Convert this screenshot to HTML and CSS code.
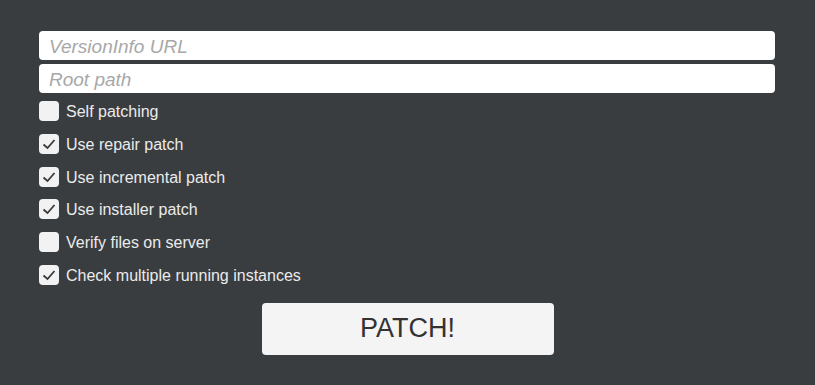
FILE: index.html
```html
<!DOCTYPE html>
<html lang="en">
<head>
    <meta charset="UTF-8">
    <title>Patcher</title>
    <link rel="stylesheet" href="styles.css">
</head>
<body>

    <!-- Patcher Settings -->
    <div class="panel">
        <input type="text" class="field" placeholder="VersionInfo URL">
        <input type="text" class="field" placeholder="Root path">

        <div class="options">
            <label class="option"><span class="box"></span><span class="text">Self patching</span></label>
            <label class="option"><span class="box checked"><svg viewBox="0 0 20 20"><path d="M4.5 10.5 L8.5 14 L15.5 6"/></svg></span><span class="text">Use repair patch</span></label>
            <label class="option"><span class="box checked"><svg viewBox="0 0 20 20"><path d="M4.5 10.5 L8.5 14 L15.5 6"/></svg></span><span class="text">Use incremental patch</span></label>
            <label class="option"><span class="box checked"><svg viewBox="0 0 20 20"><path d="M4.5 10.5 L8.5 14 L15.5 6"/></svg></span><span class="text">Use installer patch</span></label>
            <label class="option"><span class="box"></span><span class="text">Verify files on server</span></label>
            <label class="option"><span class="box checked"><svg viewBox="0 0 20 20"><path d="M4.5 10.5 L8.5 14 L15.5 6"/></svg></span><span class="text">Check multiple running instances</span></label>
        </div>

        <div class="actions">
            <button class="patch-button">PATCH!</button>
        </div>
    </div>

</body>
</html>
```

FILE: styles.css
```css
body {
    margin: 0;
    font-family: "Liberation Sans", Arial, sans-serif;
    background-color: #3a3d40;
    color: #ebebeb;
}

/* Panel */
.panel {
    padding: 31px 40px 0 39px;
    display: flex;
    flex-direction: column;
}

/* Text Fields */
.field {
    display: block;
    box-sizing: border-box;
    width: 100%;
    height: 29px;
    margin: 0 0 4px 0;
    padding: 2px 10px 0 10px;
    border: none;
    border-radius: 4px;
    background-color: #ffffff;
    font-family: "Liberation Sans", Arial, sans-serif;
    font-size: 19px;
    color: #333;
}

.field::placeholder {
    color: #a8a8a8;
    font-style: italic;
}

/* Checkbox Options */
.options {
    display: flex;
    flex-direction: column;
    gap: 12.75px;
    margin-top: 4px;
}

.option {
    display: flex;
    align-items: center;
    gap: 7px;
    height: 20px;
    font-size: 16px;
}

.option .text {
    padding-top: 2px;
}

.box {
    width: 20px;
    height: 20px;
    border-radius: 4px;
    background-color: #f2f2f2;
    display: flex;
    align-items: center;
    justify-content: center;
}

.box svg {
    width: 20px;
    height: 20px;
    fill: none;
    stroke: #3a3a3a;
    stroke-width: 1.8;
}

/* Patch Button */
.actions {
    display: flex;
    justify-content: center;
    margin-top: 18px;
    margin-right: -1px;
}

.patch-button {
    width: 292px;
    height: 52px;
    border: none;
    border-radius: 4px;
    background-color: #f4f4f4;
    color: #333;
    font-family: "Liberation Sans", Arial, sans-serif;
    font-size: 27px;
}
```
